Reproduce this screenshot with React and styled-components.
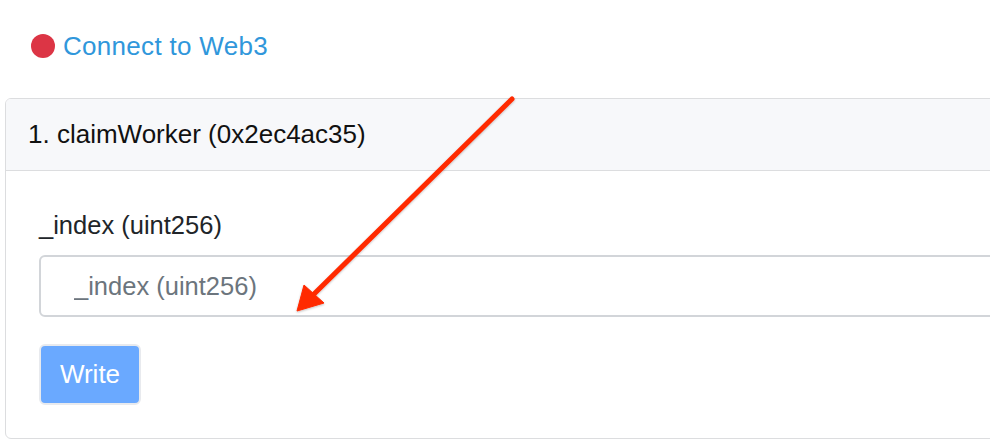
import React from 'react';
import styled, { createGlobalStyle } from 'styled-components';

const GlobalStyle = createGlobalStyle`
  html, body {
    margin: 0;
    padding: 0;
    background: #ffffff;
    overflow: hidden;
  }
  body {
    font-family: "Liberation Sans", Arial, Helvetica, sans-serif;
    color: #212529;
  }
`;

const Page = styled.div`
  position: relative;
  width: 990px;
  height: 444px;
  overflow: hidden;
  padding: 30px 0 0 5px;
  box-sizing: border-box;
`;

const ConnectRow = styled.div`
  display: flex;
  align-items: center;
  gap: 8px;
  padding-left: 26px;
  height: 32px;
  margin-bottom: 36px;
`;

const StatusDot = styled.span`
  width: 24px;
  height: 24px;
  border-radius: 50%;
  background: ${(p) => p.color};
  flex: none;
`;

const ConnectLink = styled.a`
  font-size: 26px;
  letter-spacing: 0.3px;
  color: #3097db;
  text-decoration: none;
  line-height: 32px;
`;

const Card = styled.div`
  width: 1100px;
  border: 1px solid #dcdddf;
  border-radius: 6px;
  overflow: hidden;
  box-sizing: border-box;
`;

const CardHeader = styled.div`
  background: #f7f8fa;
  border-bottom: 1px solid #dcdddf;
  padding: 17px 22px;
  font-size: 26px;
  line-height: 37px;
  color: #111;
`;

const CardBody = styled.div`
  padding: 36px 33px 33px;
`;

const Label = styled.label`
  display: block;
  font-size: 25.5px;
  line-height: 36px;
  margin-bottom: 12px;
  color: #212529;
`;

const Input = styled.input`
  display: block;
  width: 100%;
  height: 62px;
  box-sizing: border-box;
  border: 2px solid #d2d5d9;
  border-radius: 6px;
  padding: 0 33px;
  font-family: inherit;
  font-size: 25.5px;
  color: #495057;
  background: #fff;
  outline: none;
  &::placeholder {
    color: #6c757d;
  }
`;

const WriteButton = styled.button`
  margin-top: 27px;
  width: 102px;
  height: 61px;
  border: 2px solid #e8eaee;
  border-radius: 6px;
  background: #6aa9ff;
  color: #fff;
  font-family: inherit;
  font-size: 26px;
  padding: 0;
  cursor: default;
`;

const ArrowLayer = styled.svg`
  position: absolute;
  left: 0;
  top: 0;
  pointer-events: none;
`;

export default function App() {
  return (
    <>
      <GlobalStyle />
      <Page>
        <ConnectRow>
          <StatusDot color="#dc3545" />
          <ConnectLink href="#">Connect to Web3</ConnectLink>
        </ConnectRow>

        <Card>
          <CardHeader>1. claimWorker (0x2ec4ac35)</CardHeader>
          <CardBody>
            <Label htmlFor="index">_index (uint256)</Label>
            <Input id="index" placeholder="_index (uint256)" />
            <WriteButton disabled>Write</WriteButton>
          </CardBody>
        </Card>

        <ArrowLayer width="990" height="444" viewBox="0 0 990 444">
          <defs>
            <filter id="shadow" x="-20%" y="-20%" width="140%" height="140%">
              <feDropShadow dx="0" dy="1" stdDeviation="1.2" floodColor="#000" floodOpacity="0.25" />
            </filter>
          </defs>
          <g filter="url(#shadow)" fill="#ff2a00" stroke="#ff2a00">
            <line x1="512" y1="99" x2="312" y2="296" strokeWidth="5" strokeLinecap="round" />
            <polygon points="297,311 304,285 324,303" strokeWidth="1" strokeLinejoin="round" />
          </g>
        </ArrowLayer>
      </Page>
    </>
  );
}
